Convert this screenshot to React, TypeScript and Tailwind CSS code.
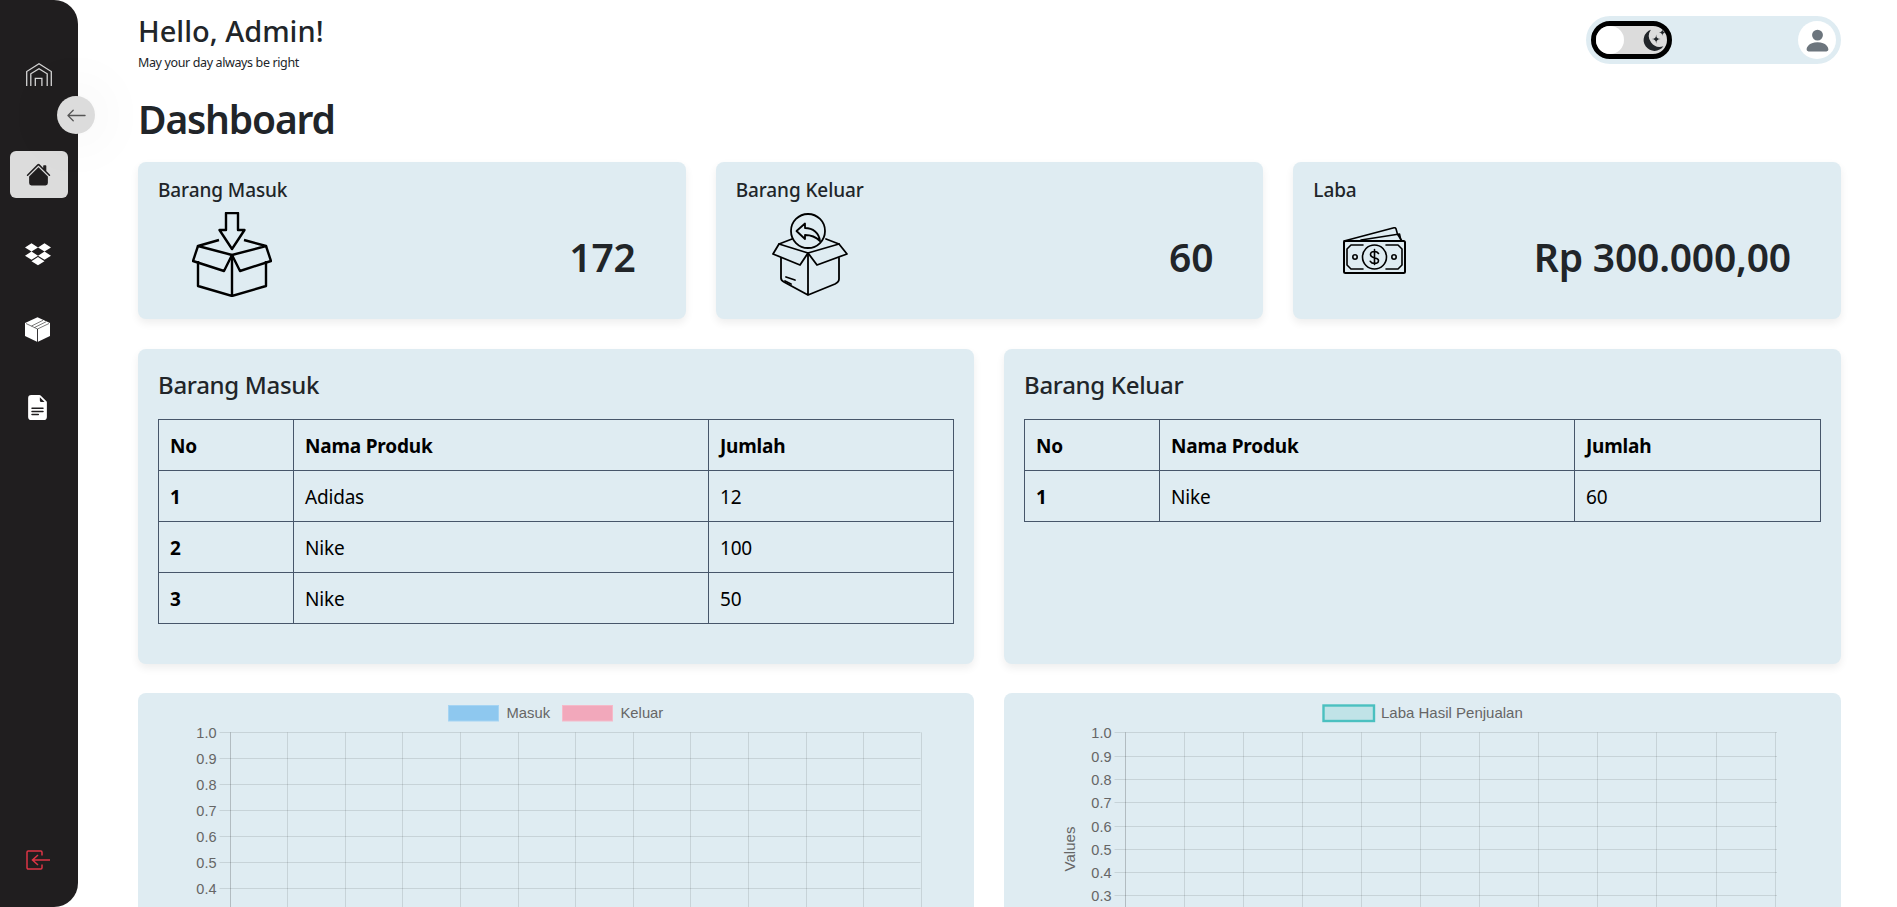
import { BsArrowLeft, BsDropbox, BsFileEarmarkTextFill, BsHouseFill, BsPersonFill } from "react-icons/bs";

const grid = "rgba(0,0,0,0.105)";
const tick = "#666";

function range(n: number) {
  return Array.from({ length: n }, (_, i) => i);
}

function sparkle(x: number, y: number, s: number) {
  return `M${x} ${y - s}Q${x} ${y} ${x + s} ${y}Q${x} ${y} ${x} ${y + s}Q${x} ${y} ${x - s} ${y}Q${x} ${y} ${x} ${y - s}Z`;
}

/* ---- drawn icons ---- */

function LogoIcon() {
  return (
    <svg width="26" height="23" viewBox="0 0 26 23" fill="none" stroke="#d4d4d4" strokeWidth="1.300">
      <path d="M.7 23V8.500L13 .8l12.300 7.700V23" />
      <path d="M4.800 23V10.800L13 5.800l8.200 5V23" />
      <path d="M9.300 23v-7.600h6.600V23" />
    </svg>
  );
}

function CubeIcon() {
  return (
    <svg width="25" height="25" viewBox="0 0 25 25">
      <path d="M12.500.3 25 6v13l-12.500 6L0 19V6z" fill="#fff" />
      <path d="M1 6.500 12.500 12l11.500-5.500M6.500 9 18 3.300M9.500 10.500 21 4.800" fill="none" stroke="#201e1f" strokeWidth="0.600" />
      <path d="M12.500 12v13" fill="none" stroke="#201e1f" strokeWidth="0.900" />
    </svg>
  );
}

function MoonIcon() {
  return (
    <svg width="23" height="24" viewBox="0 0 70 72" fill="#212529" className="absolute right-[1px] top-[3px]">
      <path d="M24 2A33 33 0 1 0 62 52A33 33 0 0 1 24 2Z" />
      <path d={sparkle(40, 30, 14)} />
      <path d={sparkle(59, 10, 11)} />
    </svg>
  );
}

function LogoutIcon() {
  return (
    <svg width="24" height="20" viewBox="0 0 24 20" fill="none" stroke="#dc3545" strokeWidth="1.500">
      <path d="M16 5.500V2.200A1.200 1.200 0 0 0 14.800 1H2.200A1.200 1.200 0 0 0 1 2.200v15.600A1.200 1.200 0 0 0 2.200 19h12.600a1.200 1.200 0 0 0 1.200-1.200v-3.300" />
      <path d="M24 10H7M12 5l-5.500 5 5.500 5" />
    </svg>
  );
}

function BoxInIcon() {
  return (
    <svg width="80" height="85" viewBox="0 0 80 85" fill="none" stroke="#000" strokeWidth="2.400" strokeLinejoin="round">
      <path d="M34 1h12v17h6.500L40 37 27.500 18H34z" />
      <path d="M27 28 6 34l34 9 34-9-22-6" />
      <path d="M6 34 1 49l31 10 8-16 8 16 31-10-5-15" />
      <path d="M6 49v25l34 10 34-10V49M40 43v41" />
    </svg>
  );
}

function BoxOutIcon() {
  return (
    <svg width="76" height="83" viewBox="0 0 76 83" fill="none" stroke="#000" strokeWidth="1.800" strokeLinejoin="round" strokeLinecap="round">
      <circle cx="36" cy="18" r="17" />
      <path d="M24.500 18 33 10.500V15c8 0 14 5 15 13-4-4-8-6-15-6v4z" />
      <path d="M20 26 7 31 1 41l27 11 8-12 9 12 30-11-8-10-13-5" />
      <path d="m7 31 29 9 31-9" />
      <path d="M9 45v20c0 2 1 3 3 4l24 13 27-11c2-1 4-2 4-5V45M36 40v42" />
      <path d="m14 64 9 3M13 68l6 3" />
    </svg>
  );
}

function MoneyIcon() {
  return (
    <svg width="63" height="47" viewBox="0 0 63 47" fill="none" stroke="#000" strokeWidth="1.600" strokeLinejoin="round" strokeLinecap="round">
      <path d="M1 14 51 .8c1-.2 1.700.2 2 1l1.500 5.500L59 14" />
      <path d="M18 13 56.500 7l1.500 7" />
      <rect x="1" y="14" width="61" height="32" rx="1.500" strokeWidth="2" />
      <path d="M20 18H8l-4 4v16l4 4h12M43 18h12l4 4v16l-4 4H43" />
      <circle cx="31.500" cy="30" r="12" />
      <circle cx="12" cy="30" r="2.200" />
      <circle cx="51" cy="30" r="2.200" />
      <path d="M35.500 26.500c-1-1.500-2.500-2-4-2-2.500 0-4 1.300-4 3 0 4.500 8 2.500 8 6 0 1.800-1.700 3-4 3-1.800 0-3.300-.7-4.200-2.200M31.500 22.500v15" />
    </svg>
  );
}

/* ---- sidebar ---- */

function Sidebar() {
  return (
    <aside className="relative z-10 flex h-full w-[78px] shrink-0 flex-col items-center rounded-r-[24px] bg-[#201e1f] pb-[37px] pt-[63px]">
      <div className="pr-[1px]">
        <LogoIcon />
      </div>
      <button className="absolute left-[57px] top-[96px] grid h-[38px] w-[38px] place-items-center rounded-full bg-[#dcdcdc] text-[#555] shadow-[0_0_60px_rgba(0,0,0,0.1)]">
        <BsArrowLeft size={21} />
      </button>
      <nav className="mt-[65px] flex w-full flex-col items-center">
        <a className="grid h-[47px] w-[58px] place-items-center rounded-[6px] bg-[#dcdcdc] pr-[2px] text-[#201e1f]">
          <BsHouseFill size={25} />
        </a>
        <a className="mt-[31px] grid h-[47px] w-[58px] place-items-center pr-[3px] text-white">
          <BsDropbox size={26} />
        </a>
        <a className="mt-[30px] grid h-[47px] w-[58px] place-items-center pr-[3px] text-white">
          <CubeIcon />
        </a>
        <a className="mt-[31px] grid h-[47px] w-[58px] place-items-center pr-[3px] text-white">
          <BsFileEarmarkTextFill size={25} />
        </a>
      </nav>
      <a className="mt-auto pr-[2px]">
        <LogoutIcon />
      </a>
    </aside>
  );
}

/* ---- header ---- */

function Topbar() {
  return (
    <div className="flex items-start justify-between">
      <div className="pt-[11px]">
        <h4 className="text-[29px] font-medium leading-[40px] text-[#212529]">Hello, Admin!</h4>
        <p className="mt-[3px] text-[12.500px] leading-[18px] tracking-[-0.03em] text-[#212529]">May your day always be right</p>
      </div>
      <div className="mt-[16px] flex h-[48px] w-[255px] items-center justify-between rounded-full bg-[#dfecf2] pl-[5px] pr-[5px]">
        <div className="relative h-[38px] w-[81px] rounded-full border-[5px] border-black bg-[#dcdcdc]">
          <span className="absolute left-0 top-0 h-[28px] w-[28px] rounded-full bg-white" />
          <MoonIcon />
        </div>
        <div className="grid h-[38px] w-[38px] place-items-center rounded-full bg-white text-[#6c757d]">
          <BsPersonFill size={29} />
        </div>
      </div>
    </div>
  );
}

/* ---- stat cards ---- */

function StatCard({ title, value, icon, iconPad }: { title: string; value: string; icon: React.ReactNode; iconPad: string }) {
  return (
    <div className="h-[157px] rounded-[8px] bg-[#dfecf2] pl-[20px] pr-[50px] pt-[15px] shadow-[0_4px_8px_rgba(0,0,0,0.07)]">
      <h6 className="text-[19px] font-medium leading-[26px] tracking-[-0.005em] text-[#212529]">{title}</h6>
      <div className="mt-[10px] flex items-center justify-between">
        <div className={`flex h-[88px] items-center ${iconPad}`}>{icon}</div>
        <span className="text-[39px] font-semibold leading-[52px] tracking-[-0.005em] text-[#212529]">{value}</span>
      </div>
    </div>
  );
}

/* ---- tables ---- */

const th = "border border-[#47566a] px-[11px] pt-[2px] text-left font-bold";
const td = "border border-[#47566a] px-[11px] pt-[2px]";

function DataTable({ title, rows }: { title: string; rows: [number, string, number][] }) {
  return (
    <div className="h-[315px] rounded-[8px] bg-[#dfecf2] px-[20px] pt-[20px] shadow-[0_4px_8px_rgba(0,0,0,0.07)]">
      <h5 className="text-[24px] font-medium leading-[32px] tracking-[-0.013em] text-[#212529]">{title}</h5>
      <table className="mt-[18px] w-full table-fixed border-collapse text-[19px] tracking-[-0.01em] text-black">
        <colgroup>
          <col className="w-[135px]" />
          <col className="w-[415px]" />
          <col />
        </colgroup>
        <thead>
          <tr className="h-[51px]">
            <th className={th}>No</th>
            <th className={th}>Nama Produk</th>
            <th className={th}>Jumlah</th>
          </tr>
        </thead>
        <tbody>
          {rows.map((r) => (
            <tr key={r[0]} className="h-[51px]">
              <th className={th}>{r[0]}</th>
              <td className={td}>{r[1]}</td>
              <td className={td}>{r[2]}</td>
            </tr>
          ))}
        </tbody>
      </table>
    </div>
  );
}

/* ---- charts ---- */

function ChartFrame({ left, right, rowStep, colStep, children }: { left: number; right: number; rowStep: number; colStep: number; children: React.ReactNode }) {
  const top = 39.3;
  const bottom = top + rowStep * 10;
  const cols = Math.round((right - left) / colStep);
  return (
    <svg className="block h-[320px] w-full" style={{ fontFamily: '"Liberation Sans", Arial, sans-serif' }}>
      {range(11).map((i) => {
        const y = Math.round(top + i * rowStep) + 0.5;
        return (
          <g key={i}>
            <line x1={left - 10} x2={right} y1={y} y2={y} stroke={grid} />
            {y < 213 && (
              <text x={left - 13} y={y + 5} textAnchor="end" fontSize="14.500" fill={tick}>
                {(1 - i / 10).toFixed(1)}
              </text>
            )}
          </g>
        );
      })}
      {range(cols + 1).map((i) => {
        const x = Math.round(left + i * colStep) + 0.5;
        return <line key={i} x1={x} x2={x} y1={top} y2={bottom + 10} stroke={i === 0 ? "rgba(0,0,0,0.2)" : grid} />;
      })}
      {children}
    </svg>
  );
}

function StockChart() {
  return (
    <ChartFrame left={91.5} right={782.5} rowStep={26} colStep={57.6}>
      <rect x="310.500" y="12.500" width="50" height="15.500" fill="#8ec8ef" stroke="#a5d4f3" />
      <text x="368.500" y="25" fontSize="14.800" fill={tick}>Masuk</text>
      <rect x="424.500" y="12.500" width="50" height="15.500" fill="#f2a8bb" stroke="#f5bac9" />
      <text x="482.500" y="25" fontSize="14.800" fill={tick}>Keluar</text>
    </ChartFrame>
  );
}

function ProfitChart() {
  return (
    <ChartFrame left={120.5} right={773} rowStep={23.3} colStep={59.1}>
      <rect x="319.500" y="12.500" width="50.500" height="15.500" fill="#c0e3e7" stroke="#4bc0c0" strokeWidth="2.400" />
      <text x="377" y="25" fontSize="15" fill={tick}>Laba Hasil Penjualan</text>
      <text transform="translate(71 156) rotate(-90)" textAnchor="middle" fontSize="15" fill={tick}>Values</text>
    </ChartFrame>
  );
}

export default function App() {
  return (
    <div className="flex h-screen overflow-hidden bg-white" style={{ fontFamily: '"Noto Sans", "Open Sans", sans-serif' }}>
      <Sidebar />
      <main className="min-w-0 flex-1 pl-[60px] pr-[56px]">
        <Topbar />
        <h2 className="mt-[21px] text-[39px] font-semibold leading-[52px] tracking-[-0.03em] text-[#212529]">Dashboard</h2>
        <div className="mt-[17px] grid grid-cols-3 gap-[30px]">
          <StatCard title="Barang Masuk" value="172" icon={<BoxInIcon />} iconPad="pl-[34px] pb-[5px]" />
          <StatCard title="Barang Keluar" value="60" icon={<BoxOutIcon />} iconPad="pl-[36px] pb-[5px]" />
          <StatCard title="Laba" value="Rp 300.000,00" icon={<MoneyIcon />} iconPad="pl-[30px] pb-[13px]" />
        </div>
        <div className="mt-[30px] grid grid-cols-[836px_1fr] gap-[30px]">
          <DataTable
            title="Barang Masuk"
            rows={[
              [1, "Adidas", 12],
              [2, "Nike", 100],
              [3, "Nike", 50],
            ]}
          />
          <DataTable title="Barang Keluar" rows={[[1, "Nike", 60]]} />
        </div>
        <div className="mt-[29px] grid grid-cols-[836px_1fr] gap-[30px]">
          <div className="rounded-[8px] bg-[#dfecf2]"><StockChart /></div>
          <div className="rounded-[8px] bg-[#dfecf2]"><ProfitChart /></div>
        </div>
      </main>
    </div>
  );
}
